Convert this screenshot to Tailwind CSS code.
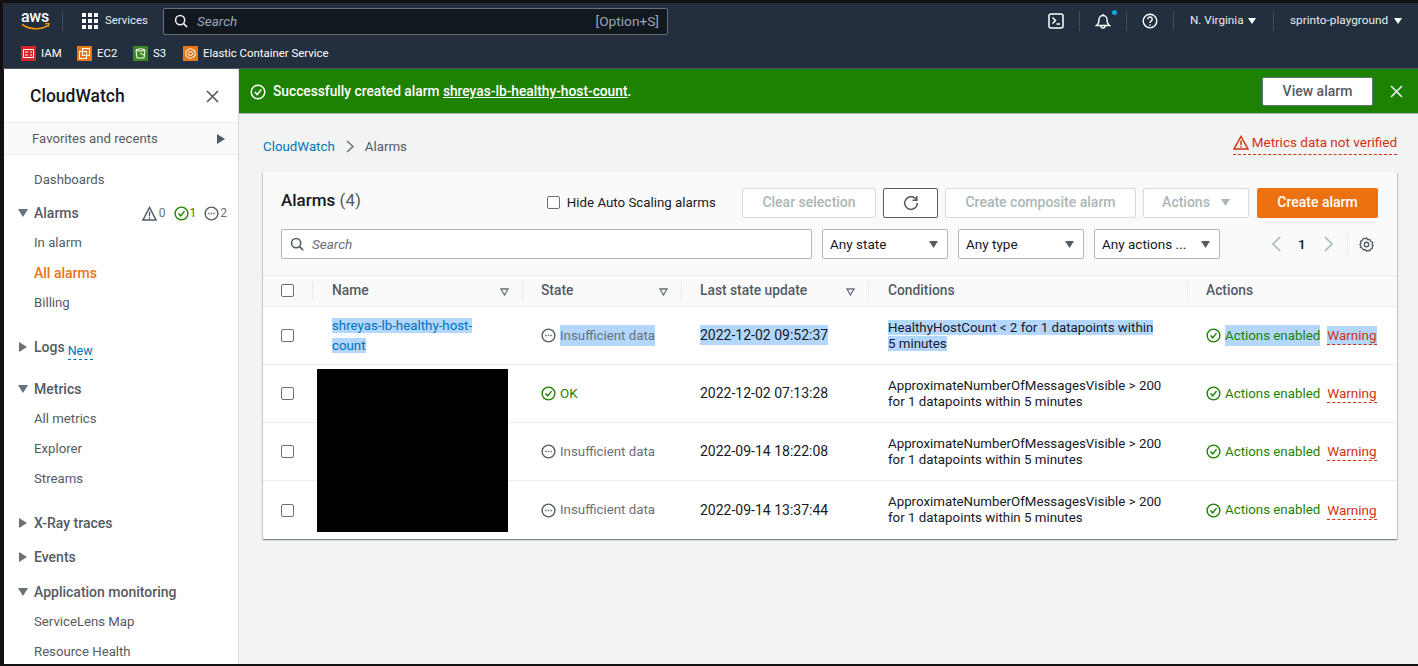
<!DOCTYPE html>
<html lang="en">
<head>
<meta charset="UTF-8">
<title>CloudWatch Alarms</title>
<script src="https://cdn.jsdelivr.net/npm/@tailwindcss/browser@4"></script>
</head>
<body class="bg-black">
<div class="w-[1418px] h-[666px] overflow-hidden bg-[#111] pl-[4px] pt-[3px] pb-[2px] font-['Roboto',sans-serif] text-[13.3px] text-[#545b64] flex flex-col">

  <!-- top nav -->
  <header class="h-[66px] shrink-0 -ml-[1px] bg-[#232f3e] text-[#eaeded] border-b border-[#4a5361]">
    <div class="h-[36px] flex items-center relative">
      <div class="w-[60px] pl-[18px] pt-[1px] relative h-[26px]">
        <span class="block text-[16px] font-medium leading-[15px] text-white tracking-[-0.3px]">aws</span>
        <svg class="w-[30px] h-[8px] -mt-[1px]" viewBox="0 0 30 8" fill="none"><path d="M1 1.5c8 5.500 19 5.500 26 .8" stroke="#f90" stroke-width="1.600"/><path d="M24 .8l4-.4-1 3.600" stroke="#f90" stroke-width="1.200"/></svg>
      </div>
      <div class="w-px h-[20px] bg-[#414d5c] -ml-[1px]"></div>
      <svg class="w-[16px] h-[16px] ml-[19px]" viewBox="0 0 16 16" fill="#fff"><rect x="0" y="0" width="4" height="4"/><rect x="6" y="0" width="4" height="4"/><rect x="12" y="0" width="4" height="4"/><rect x="0" y="6" width="4" height="4"/><rect x="6" y="6" width="4" height="4"/><rect x="12" y="6" width="4" height="4"/><rect x="0" y="12" width="4" height="4"/><rect x="6" y="12" width="4" height="4"/><rect x="12" y="12" width="4" height="4"/></svg>
      <span class="ml-[7px] w-[42px] text-[11.4px] whitespace-nowrap">Services</span>
      <div class="ml-[16px] w-[505px] h-[27px] bg-[#11181f] border border-[#687078] rounded-[2px] flex items-center px-[10px] text-[#95a5a6]">
        <svg class="w-[14px] h-[14px]" viewBox="0 0 16 16" fill="none" stroke="#eaeded" stroke-width="1.800"><circle cx="7" cy="7" r="5.200"/><path d="M11 11l4 4"/></svg>
        <span class="ml-[9px] italic text-[13.500px] text-[#9ba7b6]">Search</span>
        <span class="ml-auto mr-[-2px] text-[13.700px] text-[#9ba7b6]">[Option+S]</span>
      </div>
      <div class="flex items-center absolute left-[1045px] top-0 h-[36px]">
        <svg class="w-[16px] h-[16px]" viewBox="0 0 16 16" fill="none" stroke="#fff" stroke-width="1.500"><rect x="1" y="1" width="14" height="14" rx="2"/><path d="M4.500 4.500l3 3-3 3M8.500 11h3.500"/></svg>
        <div class="w-px h-[20px] bg-[#414d5c] ml-[15px]"></div>
        <div class="relative ml-[15px] w-[16px] h-[16px]">
          <svg class="w-[16px] h-[16px]" viewBox="0 0 16 16" fill="none" stroke="#fff" stroke-width="1.400"><path d="M1.500 12.500c2-1.500 2.500-3 2.500-6a4 4 0 0 1 8 0c0 3 .5 4.500 2.500 6zM6 13a2 2 0 0 0 4 0M8 1v1"/></svg>
          <span class="absolute -right-[6px] -top-[3px] w-[5px] h-[5px] rounded-full bg-[#0ea5e0]"></span>
        </div>
        <div class="w-px h-[20px] bg-[#414d5c] ml-[15px]"></div>
        <svg class="w-[16px] h-[16px] ml-[15px]" viewBox="0 0 16 16" fill="none" stroke="#fff" stroke-width="1.400"><circle cx="8" cy="8" r="6.800"/><path d="M5.800 6.200a2.200 2.200 0 1 1 3.400 1.800C8.400 8.500 8 9 8 10"/><path d="M8 11.200v1.200"/></svg>
        <div class="w-px h-[20px] bg-[#414d5c] ml-[15px]"></div>
        <span class="ml-[16px] text-[11.700px] w-[54px] whitespace-nowrap">N. Virginia</span>
        <svg class="w-[8px] h-[6px] ml-[4px]" viewBox="0 0 8 6" fill="#fff"><path d="M0 0h8L4 6z"/></svg>
        <div class="w-px h-[20px] bg-[#414d5c] ml-[17px]"></div>
        <span class="ml-[16px] text-[11.800px] w-[100px] whitespace-nowrap">sprinto-playground</span>
        <svg class="w-[8px] h-[6px] ml-[4px]" viewBox="0 0 8 6" fill="#fff"><path d="M0 0h8L4 6z"/></svg>
      </div>
    </div>
    <div class="h-[29px] flex items-center pl-[18px] text-[11.400px] text-white">
      <span class="w-[15px] h-[15px] bg-[#d6242d] flex items-center justify-center"><svg class="w-[11px] h-[9px]" viewBox="0 0 11 9" fill="none" stroke="#fff"><rect x=".5" y=".5" width="10" height="8"/><path d="M2 3h3M2 6h3M7 3h2M7 6h2"/></svg></span>
      <span class="ml-[5px] w-[19px]">IAM</span>
      <span class="ml-[17px] w-[15px] h-[15px] bg-[#e8781a] flex items-center justify-center"><svg class="w-[11px] h-[11px]" viewBox="0 0 11 11" fill="none" stroke="#fff"><rect x="3.500" y=".5" width="7" height="7"/><rect x=".5" y="3.500" width="7" height="7"/></svg></span>
      <span class="ml-[5px] w-[19px]">EC2</span>
      <span class="ml-[17px] w-[15px] h-[15px] bg-[#3f8624] flex items-center justify-center"><svg class="w-[11px] h-[11px]" viewBox="0 0 11 11" fill="none" stroke="#fff"><path d="M1 2c2-1.500 7-1.500 9 0L9 10H2zM1 2c2 1.500 7 1.500 9 0M5 5l4 2"/></svg></span>
      <span class="ml-[5px] w-[13px]">S3</span>
      <span class="ml-[17px] w-[15px] h-[15px] bg-[#e8781a] flex items-center justify-center"><svg class="w-[11px] h-[11px]" viewBox="0 0 11 11" fill="none" stroke="#fff"><path d="M5.500 .5l4.500 2.500v5l-4.500 2.500L1 8V3z"/><circle cx="5.500" cy="5.500" r="2"/></svg></span>
      <span class="ml-[5px]">Elastic Container Service</span>
    </div>
  </header>

  <div class="flex flex-1 min-h-0">
    <!-- side nav -->
    <aside class="w-[235px] shrink-0 bg-white border-r border-[#d5dbdb] overflow-hidden text-[13.200px]">
      <div class="h-[53px] flex items-center pl-[26px] pr-[19px] pt-[1px] justify-between">
        <span class="text-[17.500px] font-medium text-[#16191f]">CloudWatch</span>
        <svg class="w-[13px] h-[13px]" viewBox="0 0 13 13" stroke="#545b64" stroke-width="1.700"><path d="M1 1l11 11M12 1L1 12"/></svg>
      </div>
      <div class="h-[33px] flex items-center justify-between pl-[28px] pr-[13px] bg-[#fafafa] border-y border-[#eaeded]">
        <span>Favorites and recents</span>
        <svg class="w-[8px] h-[10px]" viewBox="0 0 8 10" fill="#545b64"><path d="M0 0l8 5-8 5z"/></svg>
      </div>
      <div class="h-[30px] mt-[10px] flex items-center pl-[30px]">Dashboards</div>
      <div class="h-[30px] mt-[3px] flex items-center pl-[14px] font-medium text-[14px]">
        <svg class="w-[10px] h-[8px]" viewBox="0 0 10 8" fill="#687078"><path d="M0 0h10L5 8z"/></svg>
        <span class="ml-[6px]">Alarms</span>
        <span class="ml-auto pr-[11px] flex items-center gap-[8px] text-[12px] font-normal">
          <span class="flex items-center gap-[2px] text-[#687078]"><svg class="w-[15px] h-[15px]" viewBox="0 0 16 16" fill="none" stroke="#545b64" stroke-width="1.500"><path d="M8 1.500L15 15H1zM8 6v5M8 12v1.500"/></svg>0</span>
          <span class="flex items-center gap-[1px] text-[#1d8102]"><svg class="w-[15px] h-[15px]" viewBox="0 0 16 16" fill="none" stroke="#1d8102" stroke-width="1.500"><circle cx="8" cy="8" r="6.800"/><path d="M4.800 8l2.400 2.500 4-5"/></svg>1</span>
          <span class="flex items-center gap-[1px] text-[#687078]"><svg class="w-[15px] h-[15px]" viewBox="0 0 16 16" fill="none" stroke="#545b64" stroke-width="1.500"><circle cx="8" cy="8" r="6.800"/><path d="M4.500 8h1.400M7.300 8h1.400M10.100 8h1.400"/></svg>2</span>
        </span>
      </div>
      <div class="h-[30px] flex items-center pl-[30px]">In alarm</div>
      <div class="h-[30px] flex items-center pl-[30px] font-medium text-[14px] text-[#ec7211]">All alarms</div>
      <div class="h-[30px] flex items-center pl-[30px]">Billing</div>
      <div class="h-[30px] mt-[14px] flex items-center pl-[15px] font-medium text-[14px]">
        <svg class="w-[8px] h-[10px]" viewBox="0 0 8 10" fill="#687078"><path d="M0 0l8 5-8 5z"/></svg>
        <span class="ml-[7px]">Logs</span>
        <span class="ml-[3px] mt-[9px] text-[12.500px] font-normal leading-[16px] text-[#0073bb] border-b border-dashed border-[#0073bb]">New</span>
      </div>
      <div class="h-[30px] mt-[12px] flex items-center pl-[14px] font-medium text-[14px]">
        <svg class="w-[10px] h-[8px]" viewBox="0 0 10 8" fill="#687078"><path d="M0 0h10L5 8z"/></svg>
        <span class="ml-[6px]">Metrics</span>
      </div>
      <div class="h-[30px] flex items-center pl-[30px]">All metrics</div>
      <div class="h-[30px] flex items-center pl-[30px]">Explorer</div>
      <div class="h-[30px] flex items-center pl-[30px]">Streams</div>
      <div class="h-[30px] mt-[14px] flex items-center pl-[15px] font-medium text-[14px]">
        <svg class="w-[8px] h-[10px]" viewBox="0 0 8 10" fill="#687078"><path d="M0 0l8 5-8 5z"/></svg>
        <span class="ml-[7px]">X-Ray traces</span>
      </div>
      <div class="h-[30px] mt-[4px] flex items-center pl-[15px] font-medium text-[14px]">
        <svg class="w-[8px] h-[10px]" viewBox="0 0 8 10" fill="#687078"><path d="M0 0l8 5-8 5z"/></svg>
        <span class="ml-[7px]">Events</span>
      </div>
      <div class="h-[30px] mt-[5px] flex items-center pl-[14px] font-medium text-[14px]">
        <svg class="w-[10px] h-[8px]" viewBox="0 0 10 8" fill="#687078"><path d="M0 0h10L5 8z"/></svg>
        <span class="ml-[6px]">Application monitoring</span>
      </div>
      <div class="h-[30px] flex items-center pl-[30px]">ServiceLens Map</div>
      <div class="h-[30px] flex items-center pl-[30px]">Resource Health</div>
    </aside>

    <main class="flex-1 min-w-0 bg-[#f2f3f3] flex flex-col">
      <!-- flash -->
      <div class="h-[45px] shrink-0 bg-[#1d8102] border-b border-[#aab7b8] flex items-center pl-[11px] pr-[15px] pt-[1px] text-white text-[14px]">
        <svg class="w-[16px] h-[16px]" viewBox="0 0 16 16" fill="none" stroke="#fff" stroke-width="1.500"><circle cx="8" cy="8" r="6.800"/><path d="M4.800 8l2.400 2.500 4-5"/></svg>
        <span class="ml-[7px] font-medium text-[13.750px]">Successfully created alarm <span class="underline">shreyas-lb-healthy-host-count</span>.</span>
        <button class="ml-auto w-[111px] h-[29px] bg-white border border-[#687078] rounded-[2px] font-medium text-[#545b64]">View alarm</button>
        <svg class="ml-[17px] w-[13px] h-[13px]" viewBox="0 0 13 13" stroke="#eaeded" stroke-width="1.700"><path d="M1 1l11 11M12 1L1 12"/></svg>
      </div>

      <div class="pl-[24px] pr-[21px]">
        <!-- breadcrumb -->
        <div class="h-[58px] flex items-center justify-between">
          <div class="flex items-center pt-[7px]">
            <span class="text-[#0073bb]">CloudWatch</span>
            <svg class="ml-[11px] w-[8px] h-[13px]" viewBox="0 0 8 13" fill="none" stroke="#687078" stroke-width="1.500"><path d="M1 1l6 5.500L1 12"/></svg>
            <span class="ml-[11px]">Alarms</span>
          </div>
          <div class="flex items-center gap-[3px] text-[13.500px] text-[#d13212] border-b border-dashed border-[#d13212] h-[22px] mt-[1px] pb-[2px]">
            <svg class="w-[16px] h-[15px]" viewBox="0 0 16 15" fill="none" stroke="#d13212" stroke-width="1.500"><path d="M8 1.500L15 14H1zM8 5.500v4.500M8 11v1.500"/></svg>
            <span>Metrics data not verified</span>
          </div>
        </div>

        <!-- alarms card -->
        <section class="relative bg-white shadow-[0_1px_1px_0_rgba(0,28,36,0.3),1px_1px_1px_0_rgba(0,28,36,0.15),-1px_1px_1px_0_rgba(0,28,36,0.15)] h-[367px]">
          <div class="bg-[#fafafa] h-[104px] pl-[18px] pr-[19px] border-b border-[#eaeded]">
            <div class="h-[57px] flex items-center pt-[4px]">
              <span class="text-[17px] font-medium text-[#16191f] -mt-[3px]">Alarms <span class="font-normal text-[#545b64]">(4)</span></span>
              <span class="ml-[186px] w-[13px] h-[13px] bg-white border border-[#687078] rounded-[2px]"></span>
              <span class="ml-[7px] text-[#16191f]">Hide Auto Scaling alarms</span>
              <div class="ml-auto flex gap-[7px] font-medium text-[14px] text-[#aab7b8]">
                <span class="w-[134px] h-[30px] flex items-center justify-center border border-[#d5dbdb] rounded-[2px] bg-white">Clear selection</span>
                <span class="w-[55px] h-[30px] flex items-center justify-center border border-[#545b64] rounded-[2px] bg-white"><svg class="w-[16px] h-[16px]" viewBox="0 0 16 16" fill="none" stroke="#545b64" stroke-width="1.500"><path d="M13.500 5A6.300 6.300 0 1 0 14.300 8"/><path d="M13.800 1v4.300H9.500"/></svg></span>
                <span class="w-[191px] h-[30px] flex items-center justify-center border border-[#d5dbdb] rounded-[2px] bg-white">Create composite alarm</span>
                <span class="w-[106px] h-[30px] flex items-center justify-center gap-[11px] border border-[#d5dbdb] rounded-[2px] bg-white">Actions <svg class="w-[9px] h-[7px]" viewBox="0 0 9 7" fill="#aab7b8"><path d="M0 0h9L4.500 7z"/></svg></span>
                <span class="ml-[1px] w-[121px] h-[30px] flex items-center justify-center rounded-[2px] bg-[#ec7211] text-white">Create alarm</span>
              </div>
            </div>
            <div class="flex items-center text-[#16191f] text-[13.500px]">
              <div class="w-[531px] h-[30px] bg-white border border-[#aab7b8] rounded-[2px] flex items-center pl-[8px]">
                <svg class="w-[14px] h-[14px]" viewBox="0 0 16 16" fill="none" stroke="#545b64" stroke-width="1.800"><circle cx="7" cy="7" r="5.200"/><path d="M11 11l4 4"/></svg>
                <span class="ml-[8px] italic text-[#687078]">Search</span>
              </div>
              <div class="ml-[10px] w-[126px] h-[30px] bg-white border border-[#aab7b8] rounded-[2px] flex items-center justify-between pl-[7px] pr-[9px]">Any state <svg class="w-[9px] h-[7px]" viewBox="0 0 9 7" fill="#545b64"><path d="M0 0h9L4.500 7z"/></svg></div>
              <div class="ml-[10px] w-[126px] h-[30px] bg-white border border-[#aab7b8] rounded-[2px] flex items-center justify-between pl-[7px] pr-[9px]">Any type <svg class="w-[9px] h-[7px]" viewBox="0 0 9 7" fill="#545b64"><path d="M0 0h9L4.500 7z"/></svg></div>
              <div class="ml-[10px] w-[126px] h-[30px] bg-white border border-[#aab7b8] rounded-[2px] flex items-center justify-between pl-[7px] pr-[9px]">Any actions ... <svg class="w-[9px] h-[7px]" viewBox="0 0 9 7" fill="#545b64"><path d="M0 0h9L4.500 7z"/></svg></div>
              <svg class="ml-[51px] w-[10px] h-[16px]" viewBox="0 0 10 16" fill="none" stroke="#aab7b8" stroke-width="1.600"><path d="M9 1L2 8l7 7"/></svg>
              <span class="ml-[17px] font-medium">1</span>
              <svg class="ml-[18px] w-[10px] h-[16px]" viewBox="0 0 10 16" fill="none" stroke="#aab7b8" stroke-width="1.600"><path d="M1 1l7 7-7 7"/></svg>
              <div class="ml-[13px] w-px h-[22px] bg-[#eaeded]"></div>
              <svg class="ml-[11px] w-[15px] h-[15px]" viewBox="0 0 16 16" fill="none" stroke="#545b64" stroke-width="1.400"><path d="M8 1l1.200 1.800 2.200-.2 1 2 2 1-.4 2.400 1 1-1 1.500.4 1.500-2 1-1 1.600-2.200-.2L8 15l-1.200-1.600-2.200.2-1-1.600-2-1 .4-1.500-1-1.500 1-1-.4-2.400 2-1 1-2 2.200.2z"/><circle cx="8" cy="8" r="2.400"/></svg>
            </div>
          </div>

          <!-- table -->
          <div class="grid grid-cols-[49px_210px_159px_187px_319px_210px] h-[31px] pb-[1px] bg-[#fafafa] border-b border-[#eaeded] font-medium text-[13.800px] items-center">
            <div class="pl-[18px] flex items-center"><span class="w-[13px] h-[13px] bg-white border border-[#687078] rounded-[2px]"></span></div>
            <div class="h-[20px] border-l border-[#eaeded] pl-[19px] pr-[13px] flex items-center justify-between">Name <svg class="w-[9px] h-[8px] mt-[2px]" viewBox="0 0 9 8" fill="none" stroke="#687078" stroke-width="1.300"><path d="M1 1h7L4.500 7z"/></svg></div>
            <div class="h-[20px] border-l border-[#eaeded] pl-[18px] pr-[13px] flex items-center justify-between">State <svg class="w-[9px] h-[8px] mt-[2px]" viewBox="0 0 9 8" fill="none" stroke="#687078" stroke-width="1.300"><path d="M1 1h7L4.500 7z"/></svg></div>
            <div class="h-[20px] border-l border-[#eaeded] pl-[18px] pr-[13px] flex items-center justify-between">Last state update <svg class="w-[9px] h-[8px] mt-[2px]" viewBox="0 0 9 8" fill="none" stroke="#687078" stroke-width="1.300"><path d="M1 1h7L4.500 7z"/></svg></div>
            <div class="h-[20px] border-l border-[#eaeded] pl-[19px] flex items-center">Conditions</div>
            <div class="h-[20px] border-l border-[#eaeded] pl-[18px] flex items-center">Actions</div>
          </div>

          <div class="grid grid-cols-[49px_210px_159px_187px_319px_210px] h-[58px] border-b border-[#eaeded] items-center text-[#16191f]">
            <div class="pl-[18px] flex"><span class="w-[13px] h-[13px] border border-[#687078] rounded-[2px]"></span></div>
            <div class="pl-[20px] pr-[20px] leading-[20px] text-[#0073bb]"><span class="bg-[#b3d7ff]">shreyas-lb-healthy-host-<br>count</span></div>
            <div class="pl-[19px] flex items-center text-[#687078]"><svg class="w-[15px] h-[15px] mr-[4px]" viewBox="0 0 16 16" fill="none" stroke="#545b64" stroke-width="1.500"><circle cx="8" cy="8" r="6.800"/><path d="M4.500 8h1.400M7.300 8h1.400M10.100 8h1.400"/></svg><span class="bg-[#b3d7ff] leading-[21px]">Insufficient data</span></div>
            <div class="pl-[19px] text-[14px]"><span class="bg-[#b3d7ff] leading-[20px] inline-block">2022-12-02 09:52:37</span></div>
            <div class="pl-[20px] leading-[16px]"><span class="bg-[#b3d7ff]">HealthyHostCount &lt; 2 for 1 datapoints within<br>5 minutes</span></div>
            <div class="pl-[19px] flex items-center whitespace-nowrap text-[#1d8102]"><svg class="w-[15px] h-[15px] mr-[4px]" viewBox="0 0 16 16" fill="none" stroke="#1d8102" stroke-width="1.500"><circle cx="8" cy="8" r="6.800"/><path d="M4.800 8l2.400 2.500 4-5"/></svg><span class="bg-[#b3d7ff] leading-[21px]">Actions enabled</span><span class="ml-[7px] bg-[#b3d7ff] text-[13.500px] text-[#d13212] border-b border-dashed border-[#d13212] leading-[18px]">Warning</span></div>
          </div>
          <div class="grid grid-cols-[49px_210px_159px_187px_319px_210px] h-[58px] border-b border-[#eaeded] items-center text-[#16191f]">
            <div class="pl-[18px] flex"><span class="w-[13px] h-[13px] border border-[#687078] rounded-[2px]"></span></div>
            <div></div>
            <div class="pl-[19px] flex items-center text-[#1d8102]"><svg class="w-[15px] h-[15px] mr-[4px]" viewBox="0 0 16 16" fill="none" stroke="#1d8102" stroke-width="1.500"><circle cx="8" cy="8" r="6.800"/><path d="M4.800 8l2.400 2.500 4-5"/></svg>OK</div>
            <div class="pl-[19px] text-[14px]">2022-12-02 07:13:28</div>
            <div class="pl-[20px] leading-[16px]">ApproximateNumberOfMessagesVisible &gt; 200<br>for 1 datapoints within 5 minutes</div>
            <div class="pl-[19px] flex items-center whitespace-nowrap text-[#1d8102]"><svg class="w-[15px] h-[15px] mr-[4px]" viewBox="0 0 16 16" fill="none" stroke="#1d8102" stroke-width="1.500"><circle cx="8" cy="8" r="6.800"/><path d="M4.800 8l2.400 2.500 4-5"/></svg>Actions enabled<span class="ml-[7px] text-[13.500px] text-[#d13212] border-b border-dashed border-[#d13212] leading-[18px]">Warning</span></div>
          </div>
          <div class="grid grid-cols-[49px_210px_159px_187px_319px_210px] h-[58px] border-b border-[#eaeded] items-center text-[#16191f]">
            <div class="pl-[18px] flex"><span class="w-[13px] h-[13px] border border-[#687078] rounded-[2px]"></span></div>
            <div></div>
            <div class="pl-[19px] flex items-center text-[#687078]"><svg class="w-[15px] h-[15px] mr-[4px]" viewBox="0 0 16 16" fill="none" stroke="#545b64" stroke-width="1.500"><circle cx="8" cy="8" r="6.800"/><path d="M4.500 8h1.400M7.300 8h1.400M10.100 8h1.400"/></svg>Insufficient data</div>
            <div class="pl-[19px] text-[14px]">2022-09-14 18:22:08</div>
            <div class="pl-[20px] leading-[16px]">ApproximateNumberOfMessagesVisible &gt; 200<br>for 1 datapoints within 5 minutes</div>
            <div class="pl-[19px] flex items-center whitespace-nowrap text-[#1d8102]"><svg class="w-[15px] h-[15px] mr-[4px]" viewBox="0 0 16 16" fill="none" stroke="#1d8102" stroke-width="1.500"><circle cx="8" cy="8" r="6.800"/><path d="M4.800 8l2.400 2.500 4-5"/></svg>Actions enabled<span class="ml-[7px] text-[13.500px] text-[#d13212] border-b border-dashed border-[#d13212] leading-[18px]">Warning</span></div>
          </div>
          <div class="grid grid-cols-[49px_210px_159px_187px_319px_210px] h-[58px] items-center text-[#16191f]">
            <div class="pl-[18px] flex"><span class="w-[13px] h-[13px] border border-[#687078] rounded-[2px]"></span></div>
            <div></div>
            <div class="pl-[19px] flex items-center text-[#687078]"><svg class="w-[15px] h-[15px] mr-[4px]" viewBox="0 0 16 16" fill="none" stroke="#545b64" stroke-width="1.500"><circle cx="8" cy="8" r="6.800"/><path d="M4.500 8h1.400M7.300 8h1.400M10.100 8h1.400"/></svg>Insufficient data</div>
            <div class="pl-[19px] text-[14px]">2022-09-14 13:37:44</div>
            <div class="pl-[20px] leading-[16px]">ApproximateNumberOfMessagesVisible &gt; 200<br>for 1 datapoints within 5 minutes</div>
            <div class="pl-[19px] flex items-center whitespace-nowrap text-[#1d8102]"><svg class="w-[15px] h-[15px] mr-[4px]" viewBox="0 0 16 16" fill="none" stroke="#1d8102" stroke-width="1.500"><circle cx="8" cy="8" r="6.800"/><path d="M4.800 8l2.400 2.500 4-5"/></svg>Actions enabled<span class="ml-[7px] text-[13.500px] text-[#d13212] border-b border-dashed border-[#d13212] leading-[18px]">Warning</span></div>
          </div>

          <!-- redacted block over the name column -->
          <div class="absolute left-[54px] top-[197px] w-[191px] h-[163px] bg-black"></div>
        </section>
      </div>
    </main>
  </div>
</div>
</body>
</html>
